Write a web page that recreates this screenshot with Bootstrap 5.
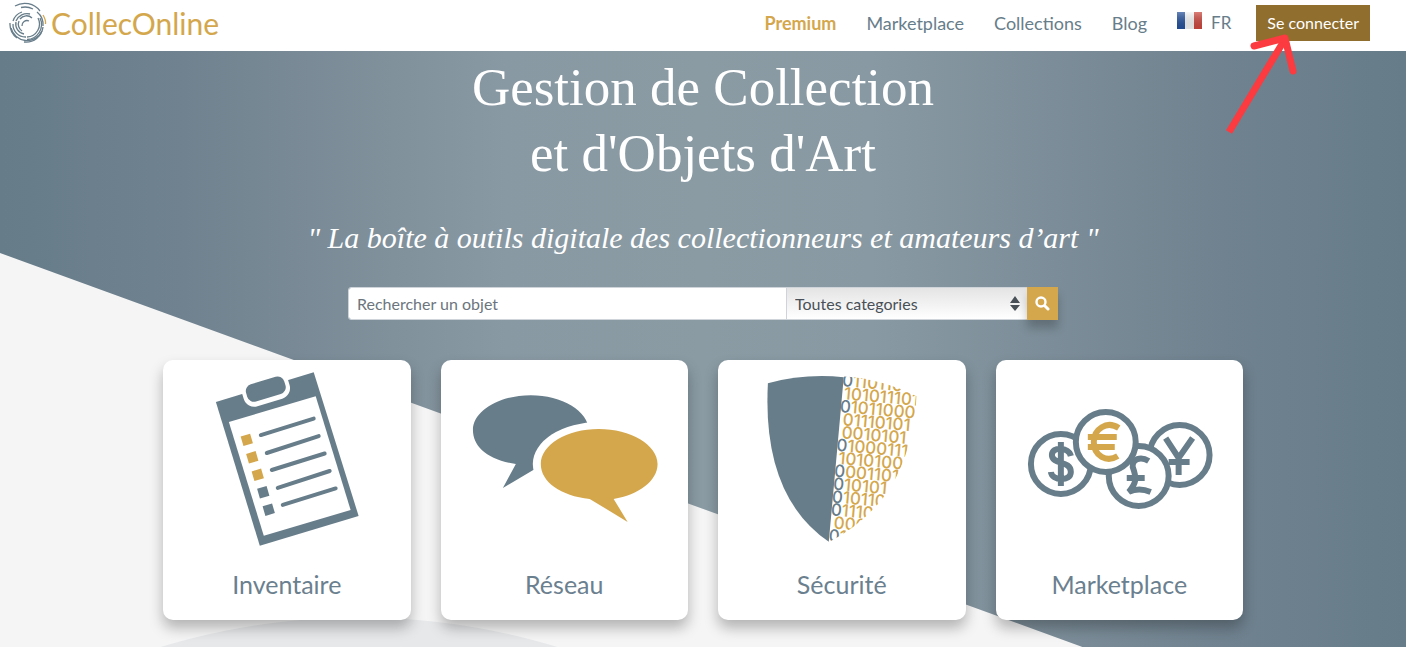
<!DOCTYPE html>
<html lang="fr">
<head>
<meta charset="utf-8">
<meta name="viewport" content="width=device-width, initial-scale=1">
<title>CollecOnline</title>
<link href="https://cdn.jsdelivr.net/npm/bootstrap@5.3.0/dist/css/bootstrap.min.css" rel="stylesheet">
<style>
  :root { --slate: #677d8a; --gold: #d4a74d; }
  body { font-family: Lato, "Open Sans", sans-serif; background: #f5f5f5; color: var(--slate); }
  .topbar { height: 51px; padding: 0 36px 6px 9px; }
  .topbar .navbar-brand { color: var(--gold); font-size: 30px; line-height: 40px; }
  .topbar .main-links .nav-link { color: var(--slate); font-size: 18px; line-height: 24px; padding: 0; }
  .topbar .main-links .premium { color: var(--gold); font-weight: 700; }
  .topbar .main-links .lang { font-size: 17px; }
  .main-links { gap: 30px; }
  .btn-login { --bs-btn-color: #fff; --bs-btn-bg: #8f6e2e; --bs-btn-hover-color: #fff; --bs-btn-hover-bg: #7d5f25; --bs-btn-border-width: 0; --bs-btn-border-radius: 0; --bs-btn-padding-x: 11px; font-size: 16px; height: 36px; line-height: 24px; }
  .login-wrap { margin-left: 25px; }
  .pointer-arrow { top: 26px; right: 71px; pointer-events: none; z-index: 5; }
  .hero { min-height: calc(100vh - 51px); isolation: isolate; }
  .hero::before { content: ""; position: absolute; inset: 0; z-index: -1;
    background: linear-gradient(90deg, #667c89 0, #70828f 13%, #8999a3 36%, #8a9ba4 50%, #8899a3 62%, #70828f 87%, #667c89 100%);
    clip-path: polygon(0 0, 100% 0, 100% calc(202px + 36.4vw), 0 202px); }
  .hero::after { content: ""; position: absolute; z-index: -2; inset: 0;
    background: radial-gradient(circle 682px at 359px 1248px, #e6e8ea 0 681px, transparent 682px); }
  .hero h1 { font-family: "Liberation Serif", serif; font-size: 53px; line-height: 66px; padding-top: 3px; }
  .tagline { font-family: "Liberation Serif", serif; font-size: 30px; line-height: 42px; margin-top: 31px; margin-bottom: 28px; }
  .search-box { max-width: 710px; }
  .search-box .form-control, .search-box .form-select { height: 33px; font-size: 16px; line-height: 24px; padding: 3px 8px; border-color: #ced4da; border-radius: 3px; color: #495057; }
  .search-box .form-control::placeholder { color: #6c757d; }
  .search-box .form-select { flex: 0 0 242px; appearance: none; background: linear-gradient(#e4e4e4, #fff); }
  .select-arrows { right: 38px; top: 9px; z-index: 6; pointer-events: none; }
  .btn-search { display: flex; align-items: center; justify-content: center; width: 31px; height: 33px; padding: 0; border: 0; border-radius: 0; background: var(--gold); box-shadow: 0 8px 10px rgba(0,0,0,.22); }
  .feature-list { max-width: 1110px; margin-top: 40px; padding: 0 15px 26px; }
  .feature-list .row { --bs-gutter-x: 30px; }
  .feature { border: 0; border-radius: 10px; box-shadow: 0 8px 14px rgba(0,0,0,.27); color: #6b808f; padding-bottom: 18px; }
  .feature svg { display: block; width: 100%; height: 202px; }
  .feature h2 { font-size: 25px; line-height: 36px; font-weight: 400; margin: 4px 0 0; }
  .bits { font-family: Inter, sans-serif; font-size: 17px; font-weight: 500; }
</style>
</head>
<body>
<nav class="topbar navbar navbar-expand bg-white flex-nowrap">
  <a class="navbar-brand d-flex align-items-center m-0 p-0 gap-1" href="#">
    <svg width="38" height="42" viewBox="0 0 38 42" fill="none" stroke="#677d8a" stroke-width="1.300" aria-hidden="true">
      <path d="M6 4A19 19 0 0 1 31 9"/><path d="M12 5.500A17 17 0 0 1 24 7"/>
      <path d="M28 10A16 16 0 0 1 34 24"/><path d="M31 16A15 15 0 0 1 18 37.500"/><path d="M29 16A13 13 0 0 1 18 35"/>
      <path d="M34 25A17 17 0 0 1 15 40"/><path d="M33 29A16.500 16.500 0 0 1 2 26"/>
      <path d="M1 21A17.500 17.500 0 0 0 8 36"/><path d="M17 35A12.500 12.500 0 0 1 4 22"/><path d="M15 32A10 10 0 0 1 7 20"/>
      <path d="M4 19A14 14 0 0 1 13 10"/><path d="M7 19A12 12 0 0 1 21 12"/>
      <path d="M13 29A8 8 0 0 1 10 19"/><path d="M11 17A8 8 0 0 1 23 16"/><path d="M13 24A5 5 0 0 1 20 19"/>
      <path stroke="#d4a74d" d="M34 13Q37 18 36.500 22"/>
    </svg>
    CollecOnline
  </a>
  <div class="main-links navbar-nav ms-auto align-items-center">
    <a class="nav-link premium" href="#">Premium</a>
    <a class="nav-link" href="#">Marketplace</a>
    <a class="nav-link" href="#">Collections</a>
    <a class="nav-link" href="#">Blog</a>
    <a class="nav-link lang d-flex align-items-center" href="#">
      <svg class="me-2 mb-1" width="26" height="17" viewBox="0 0 26 17" aria-hidden="true">
        <defs><linearGradient id="flagShade" x1="0" y1="0" x2="0" y2="1"><stop offset="0" stop-color="#fff" stop-opacity=".3"/><stop offset="1" stop-color="#000" stop-opacity=".08"/></linearGradient></defs>
        <path fill="#24509b" d="M0 0h8v17H0z"/><path fill="#f5f5f5" d="M8 0h9v17H8z"/><path fill="#cb463d" d="M17 0h8v17h-8z"/><path fill="url(#flagShade)" d="M0 0h25v17H0z"/>
      </svg>FR</a>
  </div>
  <div class="login-wrap position-relative">
    <button class="btn btn-login" type="button">Se connecter</button>
    <svg class="pointer-arrow position-absolute" width="76" height="106" viewBox="0 0 76 106" fill="none" stroke="#fb3b3f" stroke-width="7" aria-hidden="true">
      <path d="M6 101L62 8"/><path stroke-linecap="round" stroke-linejoin="round" d="M31 15L62 7L70 40"/>
    </svg>
  </div>
</nav>
<main class="hero position-relative overflow-hidden">
  <h1 class="text-center text-white fw-normal m-0">Gestion de Collection<br>et d'Objets d'Art</h1>
  <p class="tagline text-center text-white fst-italic">" La boîte à outils digitale des collectionneurs et amateurs d’art "</p>
  <form class="search-box input-group mx-auto position-relative" role="search">
    <input class="form-control" type="search" placeholder="Rechercher un objet" aria-label="Rechercher un objet">
    <select class="form-select" aria-label="Catégorie"><option>Toutes categories</option></select>
    <svg class="select-arrows position-absolute" width="10" height="16" viewBox="0 0 10 16" fill="#495057" aria-hidden="true"><path d="M5 0l5 7H0zM0 9h10l-5 6z"/></svg>
    <button class="btn-search btn" type="submit" aria-label="Rechercher"><svg width="15" height="15" viewBox="0 0 15 15" fill="none" stroke="#fff" aria-hidden="true"><circle cx="6" cy="6" r="4.500" stroke-width="2.400"/><path stroke-width="3" stroke-linecap="round" d="M10 10l3 3"/></svg></button>
  </form>
  <section class="feature-list container-fluid">
    <div class="row">
      <div class="col-3"><article class="feature card text-center">
        <svg viewBox="0 0 248 202" aria-hidden="true">
          <path fill="#677d8a" d="M53 42L151 12L196 156L97 186z"/><path fill="#fff" d="M66 62L153 36L188 150L101 176z"/>
          <g transform="translate(103 29) rotate(-17)"><rect x="-24" y="-20" width="48" height="34" rx="11" fill="#fff"/><rect x="-20" y="-9" width="40" height="18" rx="7" fill="#677d8a"/></g>
          <g stroke="#677d8a" stroke-width="4" stroke-linecap="round"><path d="M98 75L151 58.500M104 93L156 76M109 110L162 93.500M115 128L167 111M120 145L173 128.500"/></g>
          <g stroke-width="10"><path stroke="#d4a74d" d="M79.200 81.200l9.500-2.800M84.700 98.700l9.500-2.800M90.200 116.200l9.500-2.800"/><path stroke="#677d8a" d="M95.700 133.700l9.500-2.800M101.200 151.200l9.500-2.800"/></g>
        </svg>
        <h2>Inventaire</h2></article></div>
      <div class="col-3"><article class="feature card text-center">
        <svg viewBox="0 0 248 202" aria-hidden="true">
          <path fill="#677d8a" d="M75 104C46 100 32 86 32 70C32 51 58 35 90 35C121 35 148 51 148 70C148 87 127 99 106 102L62 128z"/>
          <ellipse cx="158" cy="104" rx="66" ry="42" fill="#fff"/>
          <path fill="#d4a74d" d="M149 139C120 136 100 122 100 104C100 85 126 69 158 69C190 69 217 85 217 104C217 121 198 135 173 139L187 162z"/>
        </svg>
        <h2>Réseau</h2></article></div>
      <div class="col-3"><article class="feature card text-center">
        <svg viewBox="0 0 248 202" aria-hidden="true">
          <defs><clipPath id="shieldRight"><path d="M126 16Q165 19 199 36Q196 85 176 122Q154 160 110 183L100 175z"/></clipPath></defs>
          <path fill="#677d8a" d="M50 23Q87 13 126 17L111 182Q44 136 50 23z"/>
          <g clip-path="url(#shieldRight)"><g class="bits" fill="#d4a74d" transform="translate(125 14) rotate(5)">
            <text x="0" y="12"><tspan fill="#677d8a">0</tspan>110110</text>
            <text x="3" y="25">101011101</text>
            <text x="0" y="38"><tspan fill="#677d8a">0</tspan>1011000</text>
            <text x="4" y="51">01110101</text>
            <text x="4" y="64">0010101</text>
            <text x="0" y="77"><tspan fill="#677d8a">0</tspan>1000111</text>
            <text x="3" y="90">1010100</text>
            <text x="0" y="103"><tspan fill="#677d8a">0</tspan>001101</text>
            <text x="0" y="116"><tspan fill="#677d8a">0</tspan>10101</text>
            <text x="0" y="129"><tspan fill="#677d8a">0</tspan>10110</text>
            <text x="0" y="142"><tspan fill="#677d8a">0</tspan>1110</text>
            <text x="4" y="155">000</text>
            <text x="0" y="168"><tspan fill="#677d8a">0</tspan>1</text>
          </g></g>
        </svg>
        <h2>Sécurité</h2></article></div>
      <div class="col-3"><article class="feature card text-center">
        <svg viewBox="0 0 248 202" aria-hidden="true">
          <g fill="#fff" stroke="#677d8a" stroke-width="6">
            <circle cx="184" cy="95" r="30"/><path fill="none" d="M170 78L183 98L197 78M183 97V115M173 102H194"/>
            <circle cx="143" cy="116" r="30"/><path fill="none" d="M153 101C145 96 136 99 137 107C141 118 141 123 133 132Q143 127 155 132M131 118H149"/>
            <circle cx="65" cy="104" r="30"/></g>
          <path fill="none" stroke="#677d8a" stroke-width="6" d="M65 82V126M75 96C73 87 56 86 56 95C56 105 75 100 75 112C75 122 56 121 55 112"/>
          <circle cx="110" cy="82" r="30" fill="#fff" stroke="#677d8a" stroke-width="6"/>
          <path fill="none" stroke="#d4a74d" stroke-width="6" d="M123 68C111 60 98 69 98 82C98 96 111 103 122 96M92 77H121M92 87H119"/>
        </svg>
        <h2>Marketplace</h2></article></div>
    </div>
  </section>
</main>
<script src="https://cdn.jsdelivr.net/npm/bootstrap@5.3.0/dist/js/bootstrap.bundle.min.js"></script>
</body>
</html>
